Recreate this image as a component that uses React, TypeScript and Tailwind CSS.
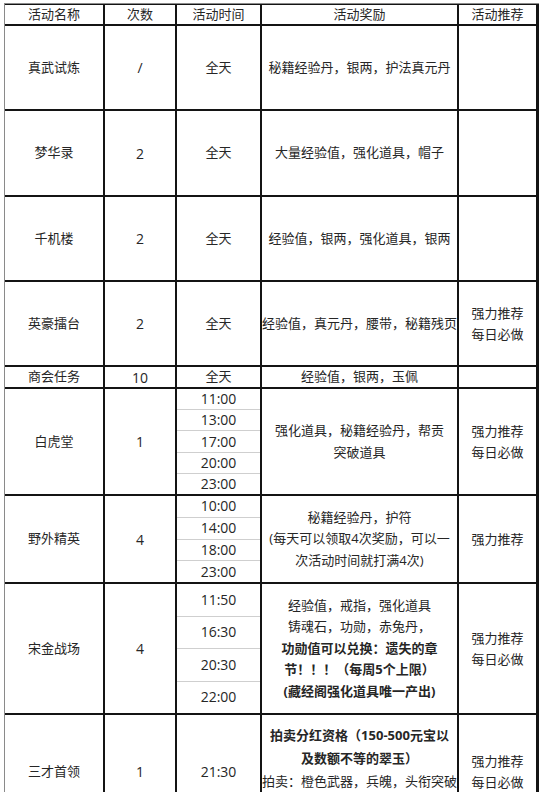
type Line = { text: string; bold?: boolean }

type Row = {
  name: string
  count: string
  times: string[]
  reward: Line[]
  rec: string[]
  height: string
  rewardTop?: boolean
}

const rows: Row[] = [
  {
    name: '真武试炼',
    count: '/',
    times: ['全天'],
    reward: [{ text: '秘籍经验丹，银两，护法真元丹' }],
    rec: [],
    height: 'h-[83px]',
  },
  {
    name: '梦华录',
    count: '2',
    times: ['全天'],
    reward: [{ text: '大量经验值，强化道具，帽子' }],
    rec: [],
    height: 'h-[84px]',
  },
  {
    name: '千机楼',
    count: '2',
    times: ['全天'],
    reward: [{ text: '经验值，银两，强化道具，银两' }],
    rec: [],
    height: 'h-[83px]',
  },
  {
    name: '英豪擂台',
    count: '2',
    times: ['全天'],
    reward: [{ text: '经验值，真元丹，腰带，秘籍残页' }],
    rec: ['强力推荐', '每日必做'],
    height: 'h-[83px]',
  },
  {
    name: '商会任务',
    count: '10',
    times: ['全天'],
    reward: [{ text: '经验值，银两，玉佩' }],
    rec: [],
    height: 'h-[20px]',
  },
  {
    name: '白虎堂',
    count: '1',
    times: ['11:00', '13:00', '17:00', '20:00', '23:00'],
    reward: [{ text: '强化道具，秘籍经验丹，帮贡' }, { text: '突破道具' }],
    rec: ['强力推荐', '每日必做'],
    height: 'h-[105px]',
  },
  {
    name: '野外精英',
    count: '4',
    times: ['10:00', '14:00', '18:00', '23:00'],
    reward: [
      { text: '秘籍经验丹，护符' },
      { text: '(每天可以领取4次奖励，可以一' },
      { text: '次活动时间就打满4次)' },
    ],
    rec: ['强力推荐'],
    height: 'h-[86px]',
  },
  {
    name: '宋金战场',
    count: '4',
    times: ['11:50', '16:30', '20:30', '22:00'],
    reward: [
      { text: '经验值，戒指，强化道具' },
      { text: '铸魂石，功勋，赤兔丹，' },
      { text: '功勋值可以兑换：遗失的章', bold: true },
      { text: '节！！！（每周5个上限）', bold: true },
      { text: '(藏经阁强化道具唯一产出)', bold: true },
    ],
    rec: ['强力推荐', '每日必做'],
    height: 'h-[129px]',
  },
  {
    name: '三才首领',
    count: '1',
    times: ['21:30'],
    reward: [
      { text: '拍卖分红资格（150-500元宝以', bold: true },
      { text: '及数额不等的翠玉）', bold: true },
      { text: '拍卖：橙色武器，兵魄，头衔突破' },
    ],
    rec: ['强力推荐', '每日必做'],
    height: 'h-[113px]',
    rewardTop: true,
  },
]

const headers = ['活动名称', '次数', '活动时间', '活动奖励', '活动推荐']

function Cell({ children, className = '' }: { children?: React.ReactNode; className?: string }) {
  return (
    <div className={`flex flex-col items-center justify-center bg-white text-center ${className}`}>
      {children}
    </div>
  )
}

export default function App() {
  return (
    <div className="min-h-screen bg-white pt-[3px] pl-[4px] font-['Open_Sans','Noto_Sans_CJK_SC',sans-serif] text-[13px] text-[#262626]">
      <div className="w-[535px] border-t border-l border-[#8a8a8a]">
        <div className="grid grid-cols-[98px_70px_83px_195px_77px] gap-[2px] bg-[#141414] pr-[2px] pt-[1px]">
          {headers.map((h) => (
            <Cell key={h} className="h-[19px] leading-[19px]">
              {h}
            </Cell>
          ))}

          {rows.map((row) => (
            <div key={row.name} className="contents">
              <Cell className={row.height}>{row.name}</Cell>
              <Cell className={`${row.height} text-[14px]`}>{row.count}</Cell>
              {row.times.length > 1 ? (
                <div className={`flex flex-col bg-white divide-y divide-[#cfcfcf] ${row.height}`}>
                  {row.times.map((t) => (
                    <div key={t} className="flex flex-1 items-center justify-center text-[14px] leading-none">
                      {t}
                    </div>
                  ))}
                </div>
              ) : (
                <Cell className={`${row.height} ${row.times[0].includes(':') ? 'text-[14px]' : ''}`}>
                  {row.times[0]}
                </Cell>
              )}
              <Cell
                className={`${row.height} ${row.rewardTop ? 'justify-start pt-[9px] leading-[23px]' : 'leading-[21.5px]'}`}
              >
                {row.reward.map((l) => (
                  <div key={l.text} className={`whitespace-nowrap ${l.bold ? 'font-bold' : ''}`}>
                    {l.text}
                  </div>
                ))}
              </Cell>
              <Cell className={`${row.height} leading-[21px]`}>
                {row.rec.map((r) => (
                  <div key={r}>{r}</div>
                ))}
              </Cell>
            </div>
          ))}
        </div>
      </div>
    </div>
  )
}
